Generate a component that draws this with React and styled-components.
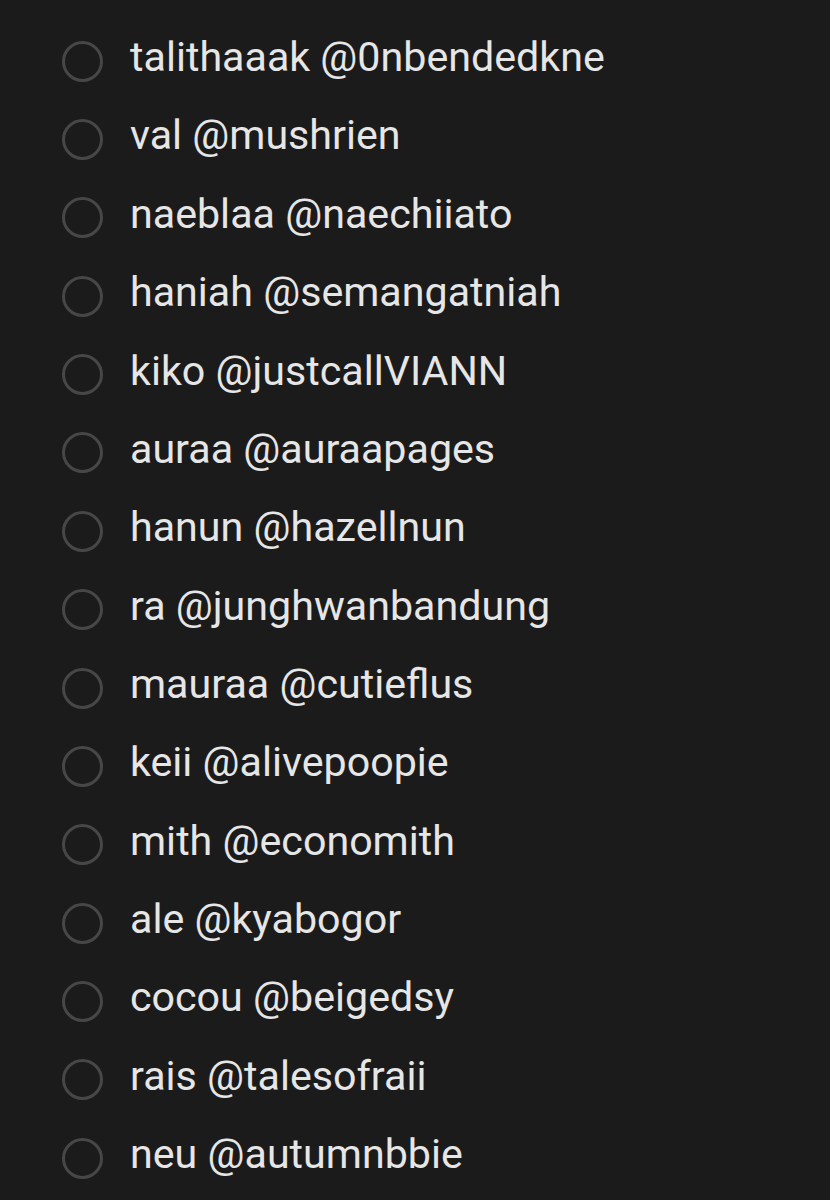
import styled, { createGlobalStyle } from "styled-components";

const GlobalStyle = createGlobalStyle`
  html, body {
    margin: 0;
    padding: 0;
    background: #1b1b1b;
  }
  body {
    font-family: Roboto, "Noto Sans", sans-serif;
  }
`;

const accounts = [
  ["talithaaak", "0nbendedkne"],
  ["val", "mushrien"],
  ["naeblaa", "naechiiato"],
  ["haniah", "semangatniah"],
  ["kiko", "justcallVIANN"],
  ["auraa", "auraapages"],
  ["hanun", "hazellnun"],
  ["ra", "junghwanbandung"],
  ["mauraa", "cutieflus"],
  ["keii", "alivepoopie"],
  ["mith", "economith"],
  ["ale", "kyabogor"],
  ["cocou", "beigedsy"],
  ["rais", "talesofraii"],
  ["neu", "autumnbbie"],
];

const App = () => {
  return (
    <Page>
      <GlobalStyle />
      <List>
        {accounts.map(([name, handle]) => (
          <Row key={handle}>
            <Radio />
            <Label>
              {name} @{handle}
            </Label>
          </Row>
        ))}
      </List>
    </Page>
  );
};

export default App;

const Page = styled.div`
  width: 830px;
  height: 1200px;
  background: #1b1b1b;
  overflow: hidden;
`;

const List = styled.div`
  display: flex;
  flex-direction: column;
  padding: 22px 0 0 62px;
`;

const Row = styled.div`
  display: flex;
  align-items: center;
  gap: 27px;
  height: 78.36px;
`;

const Radio = styled.span`
  box-sizing: border-box;
  flex: none;
  width: 41px;
  height: 41px;
  border: 3px solid #474747;
  border-radius: 50%;
`;

const Label = styled.span`
  color: #e6e6e6;
  font-size: 41.2px;
  line-height: 1;
  letter-spacing: 0;
  padding-bottom: 7px;
`;
